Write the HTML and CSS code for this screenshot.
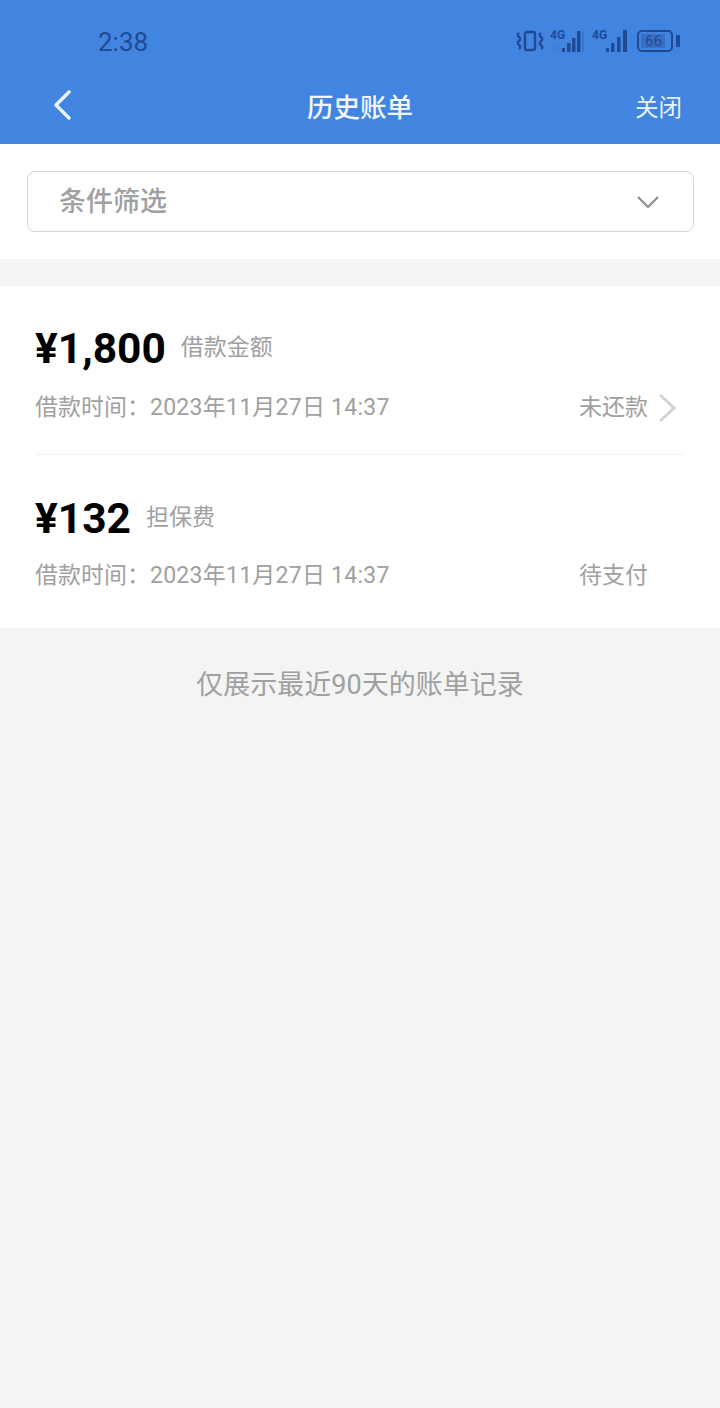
FILE: index.html
```html
<!DOCTYPE html>
<html lang="zh">
<head>
<meta charset="utf-8">
<title>历史账单</title>
<link rel="stylesheet" href="styles.css">
</head>
<body>
<header class="top">
  <div class="status">
    <span class="clock">2:38</span>
    <div class="status-icons">
      <svg width="28" height="24" viewBox="0 0 28 24" fill="none" stroke="#1f4a96" stroke-width="2.400"><rect x="9" y="3" width="10" height="18" rx="2"/><path d="M3 4q-2.500 2 0 4q2.500 2 0 4q-2.500 2 0 4q2.500 2 0 4M25 4q-2.500 2 0 4q2.500 2 0 4q-2.500 2 0 4q2.500 2 0 4"/></svg>
      <div class="sim">
        <span class="net">4G</span>
        <span class="net-sub">11</span>
        <svg width="36" height="24" viewBox="0 0 36 24" fill="#1f4a96"><rect x="12" y="19" width="3" height="4"/><rect x="17" y="14" width="3.500" height="9"/><rect x="22" y="9" width="3.500" height="14"/><rect x="27" y="2" width="3.500" height="21"/><rect x="32" y="1" width="2" height="22" opacity=".25"/></svg>
      </div>
      <div class="sim">
        <span class="net">4G</span>
        <svg width="36" height="24" viewBox="0 0 36 24" fill="#1f4a96"><rect x="14" y="19" width="3" height="4"/><rect x="19" y="14" width="3.500" height="9"/><rect x="25" y="8" width="3.500" height="15"/><rect x="31" y="1" width="4" height="22"/></svg>
      </div>
      <div class="battery"><span class="battery-fill">66</span></div>
      <span class="battery-cap"></span>
    </div>
  </div>
  <nav class="nav">
    <svg class="back" width="20" height="30" viewBox="0 0 20 30" fill="none" stroke="#e8f2fd" stroke-width="3.500" stroke-linecap="round" stroke-linejoin="round"><path d="M16 2L3 15l13 13"/></svg>
    <h1 class="title">历史账单</h1>
    <span class="close">关闭</span>
  </nav>
</header>

<section class="filter-wrap">
  <div class="filter">
    <span class="filter-label">条件筛选</span>
    <svg width="24" height="16" viewBox="0 0 24 16" fill="none" stroke="#8f8f8f" stroke-width="2.200"><path d="M2 3l10 10L22 3"/></svg>
  </div>
</section>

<section class="bills">
  <article class="bill first">
    <div class="bill-head"><strong class="amount">¥1,800</strong><span class="kind">借款金额</span></div>
    <div class="bill-meta">
      <span>借款时间：<span class="stamp">2023年11月27日 14:37</span></span>
      <div class="state">
        <span>未还款</span>
        <svg width="20" height="30" viewBox="0 0 20 30" fill="none" stroke="#d2d2d2" stroke-width="3"><path d="M3 2l14 13L3 28"/></svg>
      </div>
    </div>
  </article>
  <article class="bill second">
    <div class="bill-head"><strong class="amount">¥132</strong><span class="kind">担保费</span></div>
    <div class="bill-meta">
      <span>借款时间：<span class="stamp">2023年11月27日 14:37</span></span>
      <div class="state"><span>待支付</span><i class="state-gap"></i></div>
    </div>
  </article>
</section>

<p class="note">仅展示最近90天的账单记录</p>
</body>
</html>
```
FILE: styles.css
```css
* { box-sizing: border-box; }
html, body { margin: 0; padding: 0; }
body {
  width: 720px;
  height: 1408px;
  overflow: hidden;
  background: #f4f4f4;
  font-family: "Roboto", "Noto Sans CJK SC", sans-serif;
  color: #999;
}
.top {
  height: 144px;
  background: #4285e0;
  color: #fff;
  display: flex;
  flex-direction: column;
}
.status {
  height: 80px;
  padding: 24px 40px 0 98px;
  display: flex;
  justify-content: space-between;
  align-items: flex-start;
}
.clock {
  font-size: 26px;
  line-height: 36px;
  color: #1f4a96;
}
.status-icons {
  display: flex;
  align-items: center;
  height: 34px;
}
.sim { position: relative; width: 36px; height: 24px; margin-left: 6px; }
.sim + .sim { margin-left: 6px; }
.net {
  position: absolute;
  left: 0;
  top: 1px;
  font-size: 12px;
  line-height: 11px;
  font-weight: 700;
  color: #1f4a96;
}
.net-sub {
  position: absolute;
  left: 2px;
  top: 15px;
  font-size: 8px;
  line-height: 8px;
  color: #1f4a96;
  opacity: .35;
}
.battery {
  width: 36px;
  height: 22px;
  margin-left: 9px;
  padding: 2px;
  border: 2px solid #1f4a96;
  border-radius: 5px;
  display: flex;
}
.battery-fill {
  width: 24px;
  background: #3a6fc0;
  color: #1f4a96;
  font-size: 15px;
  line-height: 14px;
  padding-left: 4px;
  white-space: nowrap;
}
.battery-cap { width: 4px; height: 12px; margin-left: 3px; background: #1f4a96; border-radius: 1px; }
.nav {
  flex: 1;
  position: relative;
  display: flex;
  justify-content: center;
  align-items: center;
  padding-bottom: 8px;
}
.back { position: absolute; left: 53px; top: 10px; }
.title {
  margin: 0;
  font-size: 26.500px;
  line-height: 40px;
  font-weight: 500;
  color: #f2f8fe;
}
.close {
  position: absolute;
  right: 38px;
  top: 8px;
  font-size: 23.500px;
  line-height: 40px;
  color: #e8f2fd;
}
.filter-wrap {
  height: 115px;
  background: #fff;
  padding: 27px 26px 27px 27px;
}
.filter {
  height: 61px;
  border: 1px solid #d6d6d6;
  border-radius: 8px;
  padding: 0 33px 0 31px;
  display: flex;
  justify-content: space-between;
  align-items: center;
  font-size: 27px;
  color: #a0a0a0;
  font-weight: 500;
}
.filter-label { margin-top: -5px; }
.bills {
  margin-top: 27px;
  height: 342px;
  background: #fff;
  padding: 0 35px;
}
.bill { display: flex; flex-direction: column; }
.first { height: 169px; padding-top: 38px; border-bottom: 1px solid #f2f2f2; }
.second { padding-top: 39px; }
.bill-head { display: flex; align-items: center; height: 50px; }
.amount {
  font-size: 42.500px;
  line-height: 50px;
  font-weight: 700;
  color: #000;
}
.kind { margin-left: 15px; font-size: 23px; line-height: 34px; margin-top: -2px; color: #a0a0a0; }
.bill-meta {
  margin-top: 17px;
  display: flex;
  justify-content: space-between;
  align-items: center;
  height: 34px;
  font-size: 23px;
  line-height: 34px;
  color: #a0a0a0;
}
.second .bill-meta { margin-top: 15px; }
.stamp { letter-spacing: .25px; }
.state { display: flex; align-items: center; gap: 9px; margin-right: 8px; }
.state-gap { display: block; width: 20px; }
.note {
  margin: 39px 0 0;
  text-align: center;
  font-size: 27px;
  line-height: 36px;
  color: #a0a0a0;
}
```
